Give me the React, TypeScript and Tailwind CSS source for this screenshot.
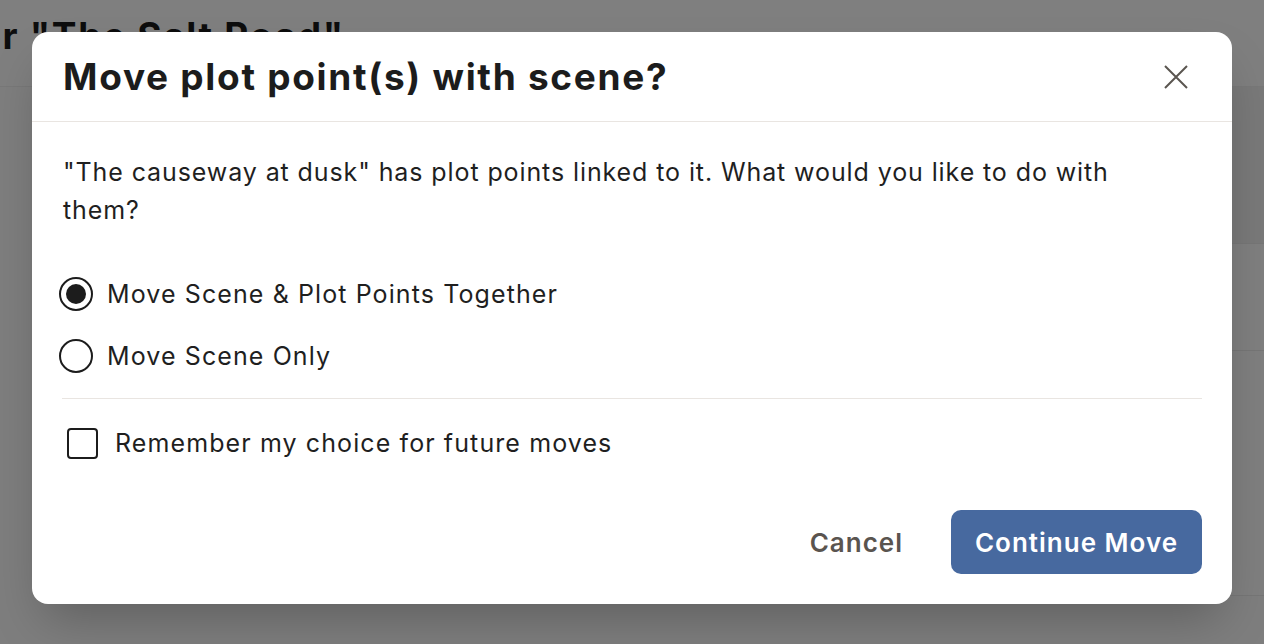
import React, { useState } from 'react';

const font = { fontFamily: 'Inter, "Noto Sans", sans-serif' };

function Radio({ checked, label, onSelect }: { checked: boolean; label: string; onSelect: () => void }) {
  return (
    <button onClick={onSelect} className="flex items-center gap-[14px] text-left -ml-[3px]">
      <span className="w-[34px] h-[34px] rounded-full border-2 border-[#1c1c1c] flex items-center justify-center shrink-0">
        {checked && <span className="w-[20px] h-[20px] rounded-full bg-[#1c1c1c]" />}
      </span>
      <span className="text-[25px] leading-[34px] tracking-[1.1px] text-[#1f1f1f]">{label}</span>
    </button>
  );
}

export default function App() {
  const [mode, setMode] = useState<'together' | 'only'>('together');
  const [remember, setRemember] = useState(false);

  return (
    <div className="relative w-[1264px] h-[644px] overflow-hidden bg-[#fdfdfd]" style={font}>
      {/* page behind the dialog */}
      <header className="h-[87px] bg-white border-b border-[#f0f0f0] flex items-start pt-[8px]">
        <h2 className="-ml-[192px] text-[37px] font-bold tracking-[1.7px] text-[#1a1a1a] whitespace-nowrap">Scenes for "The Salt Road"</h2>
      </header>
      <div className="flex">
        <div className="flex-1" />
        <aside className="w-[320px] flex flex-col">
          <div className="h-[157px] bg-[#f3f3f3] border-b border-[#ececec]" />
          <div className="h-[107px] bg-white border-b border-[#ececec]" />
          <div className="h-[245px] bg-[#fefefe] border-b border-[#ececec]" />
        </aside>
      </div>

      {/* dialog */}
      <div className="absolute inset-0 bg-black/50 flex items-start justify-center pt-[32px]">
        <div className="w-[1200px] bg-white rounded-[16px] shadow-2xl overflow-hidden">
          <div className="h-[90px] border-b border-[#e9e5e1] flex items-center justify-between pl-[31px] pr-[44px]">
            <h1 className="text-[37px] font-bold text-[#1c1c1c] tracking-[1.7px]">Move plot point(s) with scene?</h1>
            <button aria-label="Close" className="text-[#5a5550]">
              <svg width="24" height="24" viewBox="0 0 24 24" fill="none" stroke="currentColor" strokeWidth="2">
                <path d="M1 1L23 23M23 1L1 23" />
              </svg>
            </button>
          </div>

          <div className="px-[30px] pt-[31px] pb-[30px]">
            <p className="text-[25px] leading-[38px] tracking-[0.9px] text-[#1f1f1f] pl-[1px] pr-[70px]">
              "The causeway at dusk" has plot points linked to it. What would you like to do with them?
            </p>

            <div className="mt-[48px] flex flex-col gap-[28px]">
              <Radio checked={mode === 'together'} label="Move Scene & Plot Points Together" onSelect={() => setMode('together')} />
              <Radio checked={mode === 'only'} label="Move Scene Only" onSelect={() => setMode('only')} />
            </div>

            <div className="mt-[25px] border-t border-[#e9e5e1]" />

            <label className="mt-[28px] flex items-center gap-[17px] pl-[5px] cursor-pointer">
              <input
                type="checkbox"
                checked={remember}
                onChange={(e) => setRemember(e.target.checked)}
                className="appearance-none w-[31px] h-[31px] rounded-[4px] border-2 border-[#1c1c1c] checked:bg-[#1c1c1c]"
              />
              <span className="text-[25px] leading-[32px] tracking-[1.1px] text-[#1f1f1f]">Remember my choice for future moves</span>
            </label>

            <div className="mt-[51px] flex justify-end items-center gap-[24px]">
              <button className="px-[24px] h-[64px] text-[26px] font-semibold tracking-[1px] text-[#5a544f]">Cancel</button>
              <button className="w-[251px] h-[64px] rounded-[10px] bg-[#47699f] text-white text-[26px] font-semibold tracking-[1px]">
                Continue Move
              </button>
            </div>
          </div>
        </div>
      </div>
    </div>
  );
}
